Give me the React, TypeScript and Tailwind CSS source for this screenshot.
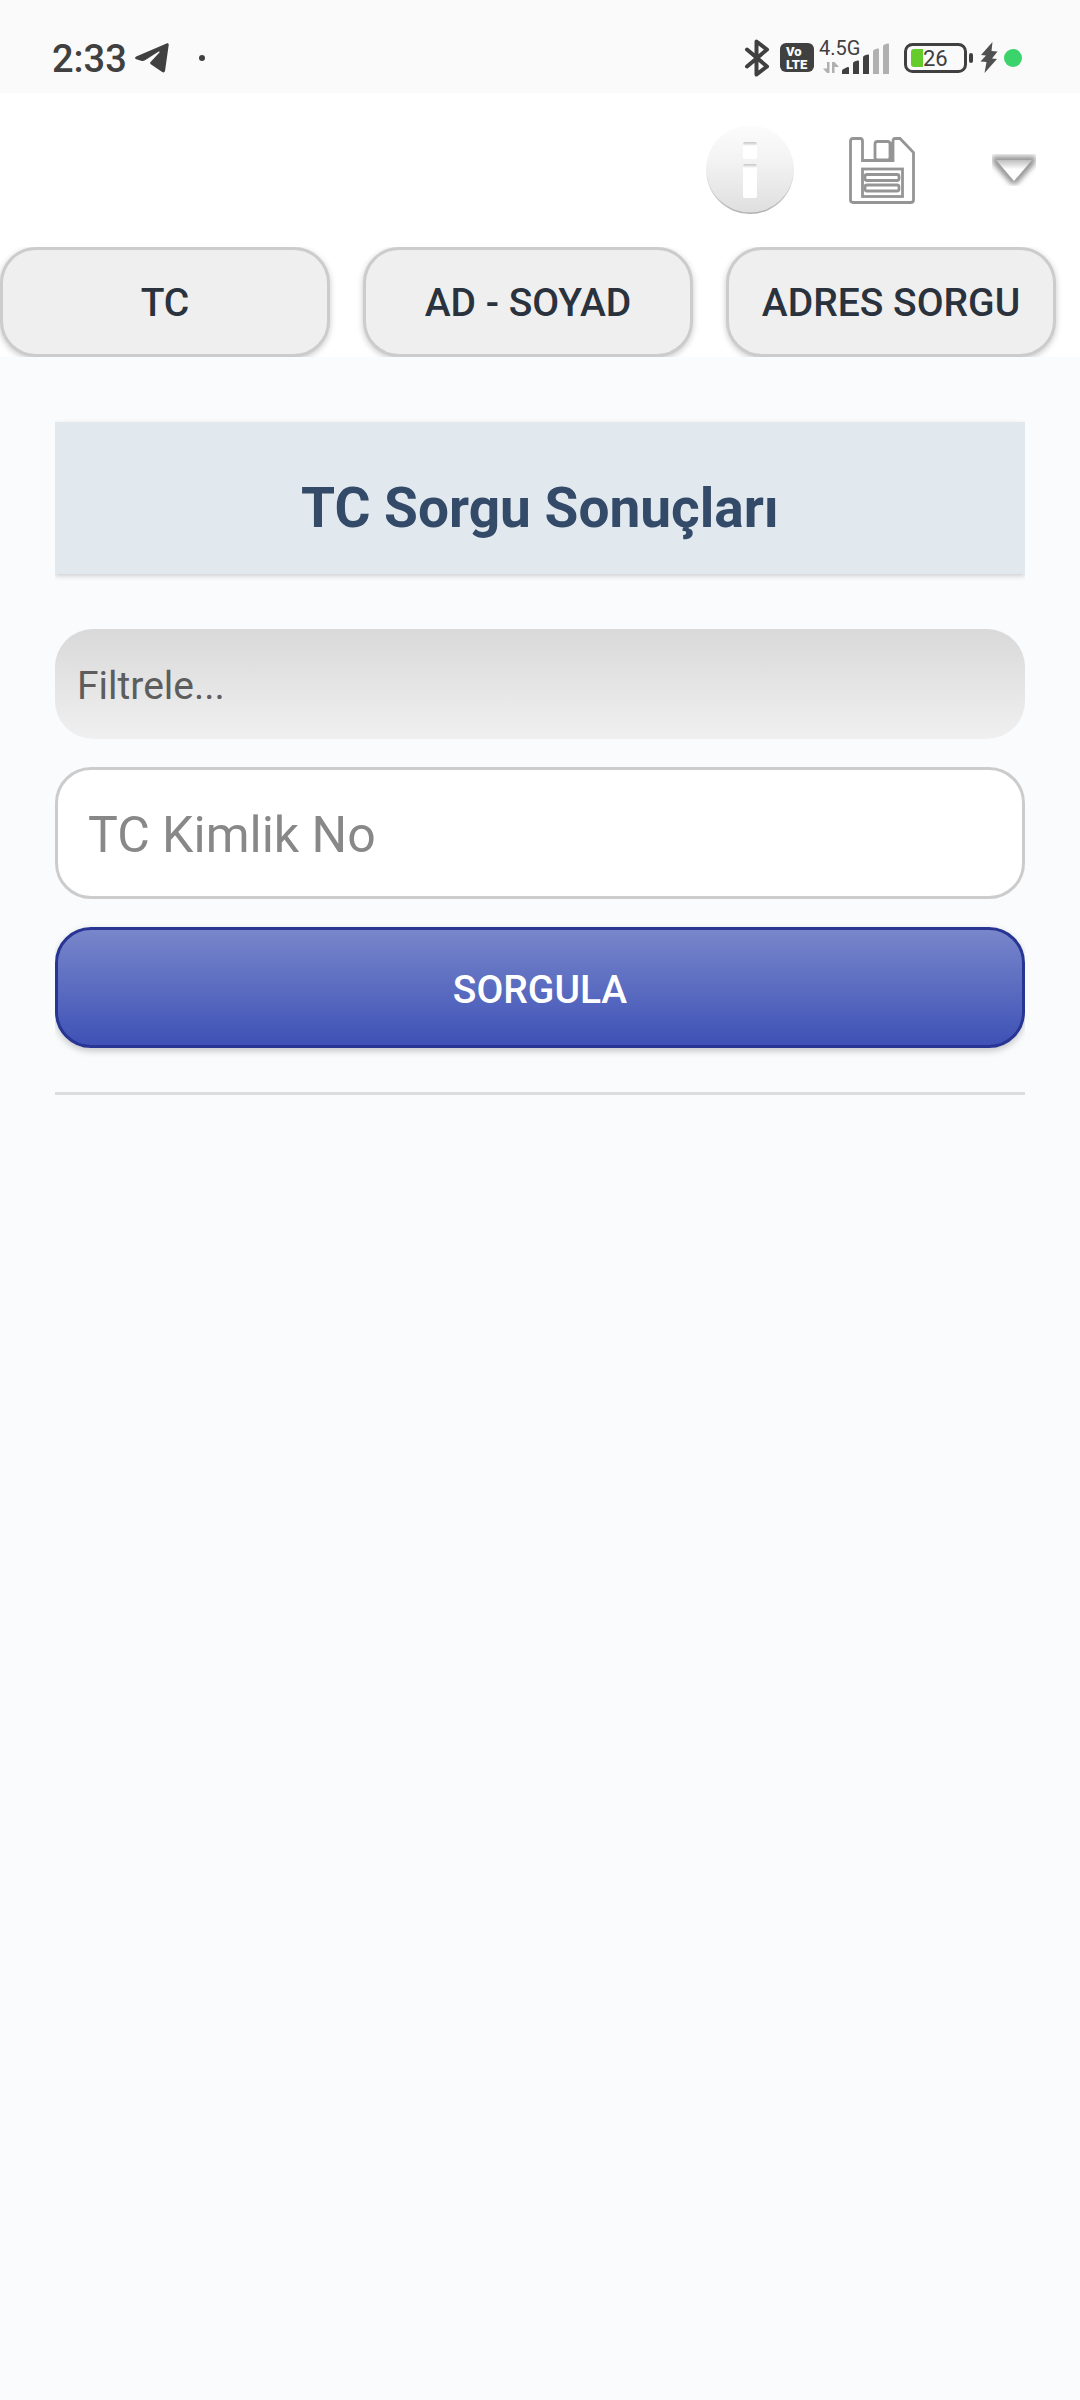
import React from "react";

const tabs = ["TC", "AD - SOYAD", "ADRES SORGU"];

function TelegramIcon() {
  return (
    <svg width="34" height="30" viewBox="0 0 34 30" fill="#404040" aria-hidden="true">
      <path d="M31.6.4c1.300-.6 2.300.1 2.100 1.600l-3.600 25.600c-.2 1.700-1.500 2.400-2.900 1.400L15.800 21.200c-.9-.7-.9-1.400-.2-2.200l8.800-9.600c.5-.6 0-1.200-.7-.8L10 17.200c-1.300.8-2.500.9-3.900.5L1.300 16.200C-.3 15.700-.4 14.300 1.200 13.500z" />
    </svg>
  );
}

function BluetoothIcon() {
  return (
    <svg width="26" height="40" viewBox="0 0 26 40" fill="none" stroke="#404040" strokeWidth="4" strokeLinecap="round" strokeLinejoin="round" aria-hidden="true">
      <path d="M3 11.500L23 28.500L12.500 36.500V3.500L23 11.500L3 28.500" />
    </svg>
  );
}

function VolteIcon() {
  return (
    <svg width="34" height="30" viewBox="0 0 34 30" fontFamily="Roboto, sans-serif" fontWeight="900" fill="#fafafa" role="img" aria-label="VoLTE">
      <rect width="34" height="29" rx="6" fill="#404040" />
      <text x="6" y="13" fontSize="13">Vo</text>
      <text x="6" y="26" fontSize="13">LTE</text>
    </svg>
  );
}

function SignalIcon() {
  return (
    <svg width="72" height="44" viewBox="0 -4 72 44" role="img" aria-label="4.5G">
      <text x="1" y="15" fontSize="20" fontFamily="Roboto, sans-serif" fill="#404040">4.5G</text>
      <g fill="#b0b0b0">
        <path d="M9 22h2.500v11H9L5 28.500h4zM14 33V22h2.500l4.500 5h-4.500v6z" />
        <path d="M55 34V11.500q0-1.500 1.500-2l3-1q1.500-.5 1.500 1V34z" />
        <path d="M65 34V6.500q0-1.500 1.500-2l3-1q1.500-.5 1.500 1V34z" />
      </g>
      <g fill="#404040">
        <path d="M24 34v-3q0-1.500 1.500-2l4-2q1.500-.5 1.500 1V34z" />
        <path d="M35 34V23.500q0-1.500 1.500-2l3-1q1.500-.5 1.500 1V34z" />
        <path d="M45 34V17.500q0-1.500 1.500-2l3-1q1.500-.5 1.500 1V34z" />
      </g>
    </svg>
  );
}

function BatteryIcon() {
  return (
    <svg width="70" height="30" viewBox="0 0 70 30" role="img" aria-label="26">
      <rect x="1.500" y="1.500" width="60" height="27" rx="7" fill="none" stroke="#404040" strokeWidth="3" />
      <path d="M19 6v18h-9q-3 0-3-3V9q0-3 3-3z" fill="#66cc2b" />
      <rect x="65" y="10" width="4" height="10" rx="2" fill="#404040" />
      <text x="19" y="23" fontSize="22" fontFamily="Roboto, sans-serif" fill="#404040">26</text>
    </svg>
  );
}

function BoltIcon() {
  return (
    <svg width="18" height="32" viewBox="0 0 18 32" fill="#505050" aria-hidden="true">
      <path d="M12.500 0L1 13l5 .5L.5 19.500l6 .5L4.500 31L17 17l-5-.5L17.500 9.500l-6-.5z" />
    </svg>
  );
}

function InfoIcon() {
  return (
    <svg width="88" height="88" viewBox="0 0 88 88" aria-hidden="true">
      <defs>
        <linearGradient id="disc" x1="0" y1="0" x2="0" y2="1">
          <stop offset="0" stopColor="#fcfcfc" />
          <stop offset=".4" stopColor="#f3f3f3" />
          <stop offset="1" stopColor="#dfdfdf" />
        </linearGradient>
        <linearGradient id="rim" x1="0" y1="0" x2="0" y2="1">
          <stop offset=".45" stopColor="#f0f0f0" />
          <stop offset="1" stopColor="#b0b0b0" />
        </linearGradient>
        <linearGradient id="slot" x1="0" y1="0" x2="0" y2="1">
          <stop offset="0" stopColor="#c4c4c4" />
          <stop offset="1" stopColor="#ffffff" />
        </linearGradient>
      </defs>
      <circle cx="44" cy="44" r="44" fill="url(#rim)" />
      <circle cx="44" cy="43" r="43.500" fill="url(#disc)" />
      <rect x="37" y="16" width="14" height="17" rx="2" fill="#fff" />
      <rect x="37" y="16" width="14" height="4" rx="2" fill="url(#slot)" />
      <rect x="37" y="38" width="14" height="34" rx="2" fill="#fff" />
      <rect x="37" y="38" width="14" height="4" rx="2" fill="url(#slot)" />
    </svg>
  );
}

function SaveIcon() {
  return (
    <svg width="66" height="68" viewBox="0 0 66 68" fill="none" stroke="#959595" strokeWidth="2.800" aria-hidden="true">
      <path d="M4 2.500H11Q13.500 2.500 13.500 5V24.500H44V5Q44 2.500 46 2.500H51L64.500 16.500V64Q64.500 66.500 61.500 66.500H4Q1.500 66.500 1.500 64V5Q1.500 2.500 4 2.500Z" />
      <rect x="26" y="5.500" width="15" height="18.500" rx="2.500" />
      <path d="M42.500 6V24" />
      <rect x="13.500" y="33" width="40" height="27.500" />
      <rect x="16" y="38.500" width="34" height="6" rx="2" />
      <rect x="16" y="49" width="34" height="6" rx="2" />
    </svg>
  );
}

function DropdownIcon() {
  return (
    <svg width="44" height="32" viewBox="0 0 44 32" aria-hidden="true">
      <defs>
        <filter id="soft" x="-20%" y="-20%" width="140%" height="140%">
          <feGaussianBlur stdDeviation="2.500" />
        </filter>
        <linearGradient id="arrow" x1="0" y1="0" x2="0" y2="1">
          <stop offset="0" stopColor="#bebebe" />
          <stop offset=".45" stopColor="#ffffff" />
        </linearGradient>
      </defs>
      <path d="M0 2H44L43 10L25 30H19L1 10Z" fill="#989898" filter="url(#soft)" />
      <path d="M4 6H40L22 27Z" fill="url(#arrow)" />
    </svg>
  );
}

export default function App() {
  return (
    <div className="min-h-screen bg-[#fafbfd] font-[Roboto,sans-serif]">
      <div className="flex h-[93px] items-center justify-between bg-[#fafafa] pt-[22px] pr-[58px] pl-[52px] text-[#404040]">
        <div className="flex items-center">
          <span className="pt-[2px] text-[38px] leading-[44px] font-medium">2:33</span>
          <span className="ml-2">
            <TelegramIcon />
          </span>
          <span className="ml-[30px] size-[6px] rounded-full bg-[#404040]" />
        </div>
        <div className="flex items-center">
          <BluetoothIcon />
          <span className="ml-[10px]">
            <VolteIcon />
          </span>
          <span className="ml-1">
            <SignalIcon />
          </span>
          <span className="ml-[14px]">
            <BatteryIcon />
          </span>
          <span className="ml-[6px]">
            <BoltIcon />
          </span>
          <span className="ml-[6px] size-[18px] rounded-full bg-[#3bd36b]" />
        </div>
      </div>

      <header className="bg-white">
        <div className="flex h-[154px] justify-end">
          <button type="button" aria-label="Bilgi" className="flex w-[132px] items-center justify-center">
            <InfoIcon />
          </button>
          <button type="button" aria-label="Kaydet" className="flex w-[132px] items-center justify-center">
            <SaveIcon />
          </button>
          <button type="button" aria-label="Menü" className="flex w-[132px] items-center justify-center">
            <DropdownIcon />
          </button>
        </div>
        <nav className="grid grid-cols-3 gap-[33px] overflow-hidden pr-6">
          {tabs.map((tab) => (
            <button
              key={tab}
              type="button"
              className="h-[110px] rounded-[36px] border-[3px] border-[#cccccc] bg-[#efefef] pt-[3px] text-[39px] font-medium whitespace-nowrap text-[#29323d] shadow-[0_2px_6px_rgba(0,0,0,0.22)]"
            >
              {tab}
            </button>
          ))}
        </nav>
      </header>

      <main className="px-[55px] pt-[58px]">
        <div className="overflow-hidden pt-[7px] pb-[7px]">
          <h1 className="bg-[#e1e8ee] pt-[54px] pb-[34px] text-center text-[55px] leading-[64px] font-bold text-[#334a68] shadow-[0_2px_5px_rgba(0,0,0,0.18)]">
            TC Sorgu Sonuçları
          </h1>
        </div>
        <form className="mt-12 flex flex-col gap-7" onSubmit={(e) => e.preventDefault()}>
          <input
            type="text"
            aria-label="Filtrele"
            placeholder="Filtrele..."
            className="h-[110px] w-full rounded-[38px] bg-linear-to-b from-[#d9d9d9] to-[#f0f0f0] px-[22px] pt-[3px] text-[39px] text-[#333333] outline-none placeholder:text-[#5d5d5d]"
          />
          <input
            type="text"
            inputMode="numeric"
            aria-label="TC Kimlik No"
            placeholder="TC Kimlik No"
            className="h-[132px] w-full rounded-[36px] border-[3px] border-[#cccccc] bg-white px-[30px] pt-[3px] text-[50px] text-[#333333] outline-none placeholder:text-[#888888]"
          />
          <div className="-mb-7 overflow-x-clip pb-7">
            <button
              type="submit"
              className="h-[121px] w-full rounded-[36px] border-[3px] border-[#283593] bg-linear-to-b from-[#7986cb] to-[#3f51b5] pt-[5px] text-[39px] font-medium text-white shadow-[0_3px_7px_rgba(0,0,0,0.22)]"
            >
              SORGULA
            </button>
          </div>
        </form>
        <hr className="mt-11 border-t-[3px] border-[#dddddd]" />
      </main>
    </div>
  );
}
